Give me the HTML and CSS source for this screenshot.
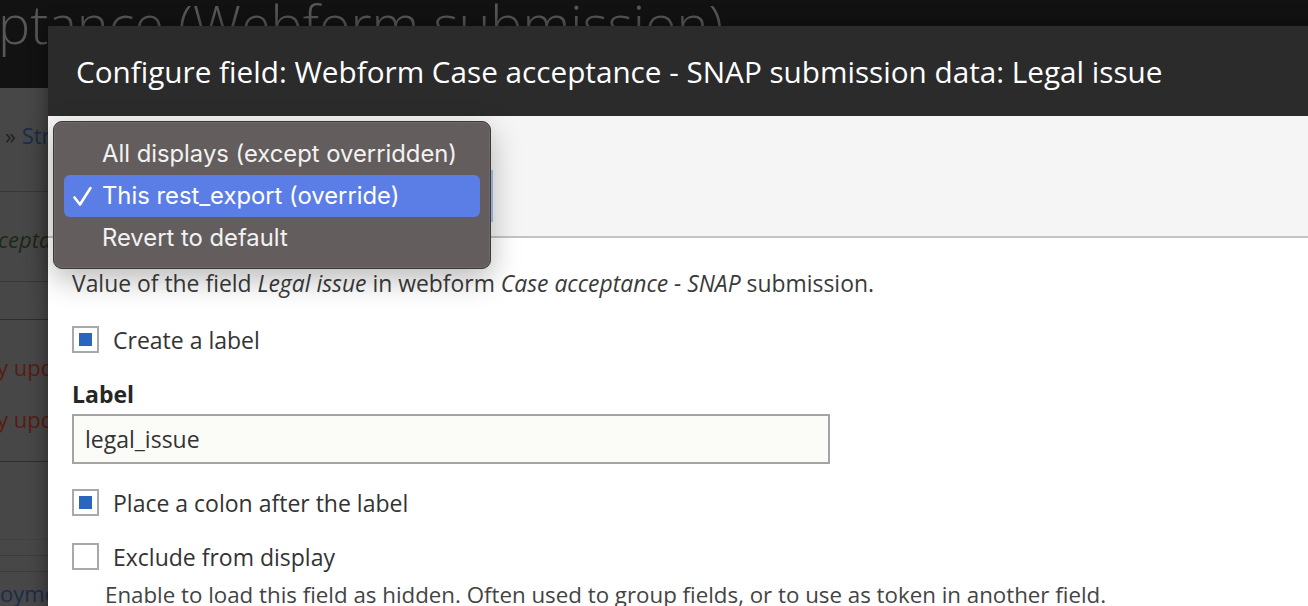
FILE: index.html
```html
<!DOCTYPE html>
<html lang="en">
<head>
<meta charset="utf-8">
<title>Configure field</title>
<link rel="stylesheet" href="styles.css">
</head>
<body>
<div class="page">
  <header class="page-header">
    <h1 class="page-title">ptance (Webform submission)</h1>
  </header>
  <div class="page-body">
    <div class="crumbs"><span class="raquo">»</span> <a class="crumb-link">Structure</a></div>
    <div class="msg msg-status"><em>ceptance</em></div>
    <div class="spacer-a"></div>
    <div class="msg msg-error">
      <div class="err-line">y updated</div>
      <div class="err-line">y updated</div>
    </div>
    <div class="table-area">
      <div class="table-row faint"></div>
      <div class="table-row"></div>
      <div class="table-row linkrow"><a class="crumb-link">oyment</a></div>
    </div>
  </div>
</div>

<div class="dialog" role="dialog">
  <div class="dialog-titlebar">
    <h2 class="dialog-title">Configure field: Webform Case acceptance - SNAP submission data: Legal issue</h2>
  </div>
  <div class="dialog-body">
    <div class="override-bar">
      <div class="select-mock">This rest_export (override)</div>
    </div>
    <div class="form-main">
      <p class="field-desc">Value of the field <em>Legal issue</em> in webform <em>Case acceptance - SNAP</em> submission.</p>
      <div class="check-row row-create">
        <span class="checkbox checked"></span>
        <span class="check-label">Create a label</span>
      </div>
      <div class="text-field">
        <label class="field-label">Label</label>
        <div class="text-input">legal_issue</div>
      </div>
      <div class="check-row row-colon">
        <span class="checkbox checked"></span>
        <span class="check-label">Place a colon after the label</span>
      </div>
      <div class="check-row row-exclude">
        <span class="checkbox"></span>
        <span class="check-label">Exclude from display</span>
      </div>
      <p class="help-text">Enable to load this field as hidden. Often used to group fields, or to use as token in another field.</p>
    </div>
  </div>
</div>

<div class="popup-menu" role="listbox">
  <div class="popup-item">All displays (except overridden)</div>
  <div class="popup-item selected"><svg class="tick" width="22" height="22" viewBox="0 0 22 22" aria-hidden="true"><path d="M2.5 11.5 L8 18.5 L18.5 2" fill="none" stroke="#fff" stroke-width="2.6" stroke-linecap="round" stroke-linejoin="round"/></svg>This rest_export (override)</div>
  <div class="popup-item">Revert to default</div>
</div>
</body>
</html>
```

FILE: styles.css
```css
* { box-sizing: border-box; }
html, body {
  margin: 0;
  padding: 0;
  width: 1308px;
  height: 606px;
  overflow: hidden;
}
body {
  position: relative;
  font-family: "Open Sans", "DejaVu Sans", sans-serif;
  background: #474747;
}

/* background page (under overlay) */
.page { width: 1308px; }
.page-header {
  height: 88px;
  background: #121212;
  overflow: hidden;
}
.page-title {
  margin: 0;
  padding: 0;
  font-weight: 300;
  font-size: 54px;
  line-height: 54px;
  color: #575757;
  white-space: nowrap;
  margin-top: -4px;
  margin-left: -2px;
}
.page-body {
  background: #474747;
  font-size: 22px;
  line-height: 30px;
  white-space: nowrap;
  overflow: hidden;
}
.crumbs {
  height: 104px;
  padding: 32px 0 0 5px;
  border-bottom: 1px solid #2b441d;
  color: #1f1f1f;
}
.crumb-link { color: #1b2c4a; }
.msg-status {
  height: 90px;
  padding-top: 32px;
  border-bottom: 1px solid #2b441d;
  color: #1d2817;
  text-indent: -2px;
}
.spacer-a { height: 37px; }
.msg-error {
  height: 143px;
  border-top: 1px solid #5a1c10;
  border-bottom: 1px solid #5a1c10;
  padding-top: 21px;
  color: #571c12;
  text-indent: -3px;
}
.err-line { line-height: 52px; height: 52px; }
.table-area { padding-top: 77px; }
.table-row {
  border-top: 1px solid #3c3c3c;
  height: 16px;
}
.table-row.faint { border-top-color: #424242; }
.table-row.linkrow {
  height: 43px;
  line-height: 42px;
  border-bottom: 1px solid #3c3c3c;
}

/* dialog */
.dialog {
  position: absolute;
  left: 48px;
  top: 26px;
  width: 1300px;
  height: 600px;
  background: #fff;
  box-shadow: 0 0 18px rgba(0, 0, 0, 0.45);
  color: #333;
}
.dialog-titlebar {
  height: 90px;
  background: #2b2b2b;
  display: flex;
  align-items: center;
  padding-left: 28px;
}
.dialog-title {
  margin: 0;
  color: #fff;
  font-weight: 500;
  font-size: 29.7px;
  white-space: nowrap;
  letter-spacing: 0;
  padding-top: 1px;
}
.override-bar {
  height: 122px;
  background: #f5f5f5;
  border-bottom: 2px solid #c4c4c4;
  padding: 54px 0 0 24px;
}
.select-mock {
  width: 421px;
  height: 52px;
  border: 2px solid #a9c4ec;
  outline: 1px solid #4d7cc4;
  outline-offset: -3px;
  background: #fff;
  font-size: 18px;
  line-height: 48px;
  padding-left: 10px;
}
.form-main {
  padding: 31px 24px 0 24px;
}
.field-desc {
  margin: 0;
  font-size: 22.9px;
  line-height: 30px;
  color: #3a3a3a;
  white-space: nowrap;
}
.check-row {
  display: flex;
  align-items: center;
  height: 27px;
}
.row-create { margin-top: 27px; }
.row-colon { margin-top: 25px; }
.row-exclude { margin-top: 27px; }
.checkbox {
  width: 27px;
  height: 27px;
  border: 2px solid #a9a9a9;
  background: #fff;
  display: flex;
  align-items: center;
  justify-content: center;
  flex: none;
}
.checkbox.checked::after {
  content: "";
  width: 13px;
  height: 13px;
  background: #2a66bd;
}
.check-label {
  margin-left: 14px;
  font-size: 23px;
  line-height: 30px;
  color: #333;
  white-space: nowrap;
}
.text-field { margin-top: 26px; }
.field-label {
  display: block;
  font-weight: 700;
  font-size: 23px;
  line-height: 30px;
  color: #262626;
}
.text-input {
  margin-top: 5px;
  width: 758px;
  height: 50px;
  border: 2px solid #a4a4a4;
  background: #fbfbf8;
  font-size: 23px;
  line-height: 46px;
  padding-left: 11px;
  color: #333;
}
.help-text {
  margin: 11px 0 0 33px;
  font-size: 22.3px;
  line-height: 28px;
  color: #444;
  white-space: nowrap;
}

/* native popup menu */
.popup-menu {
  position: absolute;
  left: 53px;
  top: 121px;
  width: 438px;
  height: 148px;
  background: #635e5d;
  border: 1px solid #3b3838;
  border-radius: 9px;
  box-shadow: 0 0 0 1px rgba(255,255,255,0.08) inset, 0 10px 30px rgba(0, 0, 0, 0.28);
  padding: 11px 10px 0 10px;
  font-family: Inter, "Liberation Sans", sans-serif;
  font-size: 23.8px;
  color: #f2f2f2;
}
.popup-item {
  height: 42px;
  line-height: 42px;
  padding-left: 38px;
  position: relative;
  border-radius: 6px;
  white-space: nowrap;
}
.popup-item.selected {
  background: #5b7ee6;
  color: #fff;
}
.tick {
  position: absolute;
  left: 8px;
  top: 11px;
}
```
